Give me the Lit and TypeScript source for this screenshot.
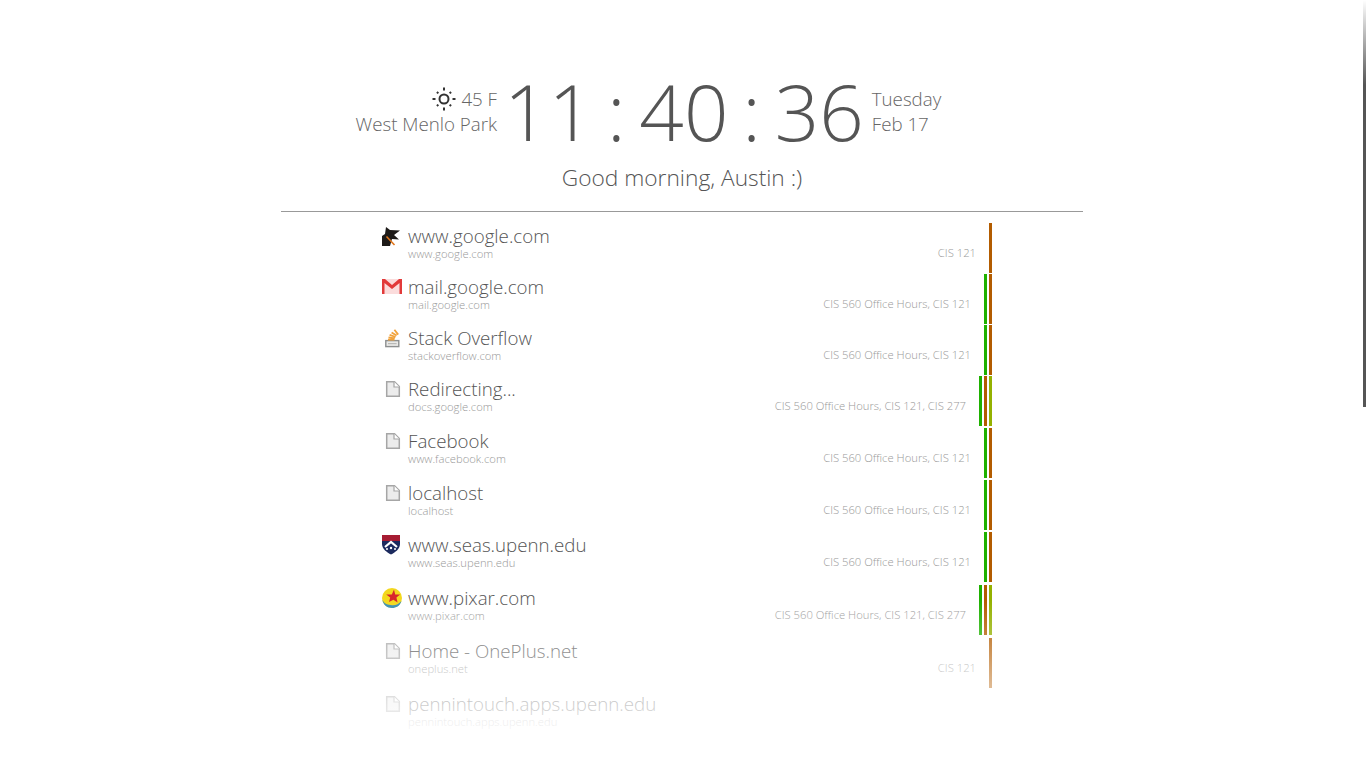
import { LitElement, html, css, svg } from "lit";
import { customElement } from "lit/decorators.js";

type Site = {
  title: string;
  host: string;
  icon: string;
  tags: string;
  bars: string[];
  gap: number;
};

const GREEN = "#1fb100";
const BROWN = "#b35c00";
const OLIVE = "#94b100";

// the row pitch grows slowly down the list in the reference
const sites: Site[] = [
  { title: "www.google.com", host: "www.google.com", icon: "dog", tags: "CIS 121", bars: [BROWN], gap: 1 },
  { title: "mail.google.com", host: "mail.google.com", icon: "mail", tags: "CIS 560 Office Hours, CIS 121", bars: [GREEN, BROWN], gap: 1 },
  { title: "Stack Overflow", host: "stackoverflow.com", icon: "stack", tags: "CIS 560 Office Hours, CIS 121", bars: [GREEN, BROWN], gap: 1 },
  { title: "Redirecting...", host: "docs.google.com", icon: "doc", tags: "CIS 560 Office Hours, CIS 121, CIS 277", bars: [GREEN, BROWN, OLIVE], gap: 2 },
  { title: "Facebook", host: "www.facebook.com", icon: "doc", tags: "CIS 560 Office Hours, CIS 121", bars: [GREEN, BROWN], gap: 2 },
  { title: "localhost", host: "localhost", icon: "doc", tags: "CIS 560 Office Hours, CIS 121", bars: [GREEN, BROWN], gap: 2 },
  { title: "www.seas.upenn.edu", host: "www.seas.upenn.edu", icon: "penn", tags: "CIS 560 Office Hours, CIS 121", bars: [GREEN, BROWN], gap: 3 },
  { title: "www.pixar.com", host: "www.pixar.com", icon: "ball", tags: "CIS 560 Office Hours, CIS 121, CIS 277", bars: [GREEN, BROWN, OLIVE], gap: 3 },
  { title: "Home - OnePlus.net", host: "oneplus.net", icon: "doc", tags: "CIS 121", bars: [BROWN], gap: 3 },
  { title: "pennintouch.apps.upenn.edu", host: "pennintouch.apps.upenn.edu", icon: "doc", tags: "", bars: [], gap: 0 },
];

const icons: Record<string, unknown> = {
  dog: svg`
    <path fill="#1d1a18" d="M0 10 3 8 4 1 8 4 18 4.5 12 9 17 13.5 10 13 8 20H0Z" />
    <path fill="none" stroke="#e0761c" stroke-width="1.6" d="M4.5 10.5 12.5 19" />`,
  mail: svg`
    <rect x="0" y="2" width="20" height="15" fill="#fbdcdc" />
    <path fill="#e23a3a" d="M0 2H3L10 8 17 2H20V17H17.5V6L10 12 2.5 6V17H0Z" />`,
  stack: svg`
    <rect x="3.8" y="12.6" width="13" height="6" fill="#e9e9e7" stroke="#8d8f90" stroke-width="1.4" />
    <path fill="none" stroke="#b9b9b7" stroke-width="1.2" d="M6 15.6H14.6" />
    <path fill="none" stroke="#f1a33c" stroke-width="1.8" d="M6 11.6H12.5M6.5 9.3 12.8 10.4M7.6 6.8 13.6 9M9.6 4.4 14.6 7.6M12.4 1.8 16.2 6.6" />`,
  doc: svg`
    <path fill="#ececec" stroke="#a6a6a6" stroke-width="1.5" d="M4.7 2.7H12.5L17.3 7.5V17.3H4.7Z" />
    <path fill="#fff" stroke="#a6a6a6" stroke-width="1.2" d="M12 2.7V8H17.3" />`,
  penn: svg`
    <path fill="#1c2a5e" d="M0 0H18V9C18 14 13 17.5 9 19.5 5 17.5 0 14 0 9Z" />
    <rect x="0" y="0" width="18" height="6" fill="#a61c32" />
    <path fill="none" stroke="#fff" stroke-width="2.2" d="M3 12 9 7 15 12" />
    <circle cx="5" cy="14" r="1" fill="#fff" /><circle cx="13" cy="14" r="1" fill="#fff" /><circle cx="9" cy="13" r="1.2" fill="#fff" />`,
  ball: svg`
    <circle cx="10" cy="10" r="10" fill="#f3d81e" />
    <path fill="#3a8fb5" d="M0.4 11.5C2 16 6 17 10 17.2 14 17.4 17 16 19.4 13 18 18 14 20 10 20 5 20 1 16.5 0.4 11.5Z" />
    <path fill="#d8262c" d="M12 1.5 13.2 6.4 18.2 6.6 14.4 9.6 15.6 14.4 11.4 11.8 7 14 8.2 9.6 4.2 6.6 9.8 6.6Z" />`,
};

@customElement("app-root")
export class AppRoot extends LitElement {
  static styles = css`
    :host {
      display: block;
      position: relative;
      height: 768px;
      overflow: hidden;
      background: #fff;
      font-family: "Open Sans", "Liberation Sans", sans-serif;
      font-weight: 300;
      color: #555;
    }

    .page {
      width: 802px;
      margin-left: 281px;
      padding-top: 63px;
    }

    .clock-row {
      display: grid;
      grid-template-columns: 216px auto 1fr;
      column-gap: 8px;
      align-items: center;
    }

    .weather,
    .date {
      font-size: 18.72px;
      line-height: 25px;
      color: #666;
    }

    .weather {
      text-align: right;
    }

    .temp {
      display: flex;
      justify-content: flex-end;
      align-items: center;
      gap: 5px;
    }

    .clock {
      font-size: 78px;
      line-height: 96px;
      word-spacing: -6.4px;
      margin-left: -1px;
      white-space: pre;
      color: #555;
    }

    .greeting {
      text-align: center;
      font-size: 22.72px;
      line-height: 30px;
      margin-top: 4px;
    }

    hr {
      margin: 18px 0 11px;
      border: 0;
      border-top: 1px solid #999;
      height: 0;
    }

    .list {
      width: 610px;
      margin-left: 101px;
    }

    .row {
      display: flex;
      height: 50px;
    }

    .icon {
      width: 20px;
      height: 20px;
      margin-top: 3px;
      margin-right: 6px;
      flex: none;
    }

    .names {
      flex: 1;
      min-width: 0;
    }

    .title {
      font-size: 18.72px;
      line-height: 24px;
      margin-top: 1px;
      color: #555;
    }

    .host {
      font-size: 11.25px;
      line-height: 13px;
      color: #999;
      margin-top: -1px;
    }

    .tags {
      font-size: 11.25px;
      line-height: 15px;
      color: #999;
      margin: 22px 13px 0 0;
      white-space: nowrap;
    }

    .bars {
      display: flex;
      gap: 2px;
    }

    .bar {
      width: 3px;
      height: 50px;
    }

    .fade {
      position: absolute;
      left: 0;
      right: 0;
      top: 600px;
      height: 150px;
      background: linear-gradient(rgba(255, 255, 255, 0), #fff);
    }

    .scrollbar {
      position: absolute;
      top: 0;
      right: 0;
      width: 3px;
      height: 407px;
      background: linear-gradient(rgba(85, 85, 85, 0), #555 85px);
    }
  `;

  private renderSun() {
    const rays = [0, 45, 90, 135, 180, 225, 270, 315];
    return html`<svg width="24" height="24" viewBox="0 0 24 24">
      <circle cx="12" cy="12" r="4.5" fill="none" stroke="#333" stroke-width="2" />
      ${rays.map(
        (a) => svg`<path d=${a % 90 ? "M12 2V4" : "M12 .5V3.5"} stroke="#333" stroke-width="2" transform="rotate(${a} 12 12)" />`
      )}
    </svg>`;
  }

  private renderRow(s: Site) {
    return html`<div class="row" style="margin-bottom:${s.gap}px">
      <svg class="icon" viewBox="0 0 20 20">${icons[s.icon]}</svg>
      <div class="names">
        <div class="title">${s.title}</div>
        <div class="host">${s.host}</div>
      </div>
      <div class="tags">${s.tags}</div>
      <div class="bars">
        ${s.bars.map((c) => html`<div class="bar" style="background:${c}"></div>`)}
      </div>
    </div>`;
  }

  render() {
    return html`
      <div class="page">
        <div class="clock-row">
          <div class="weather">
            <div class="temp">${this.renderSun()}<span>45 F</span></div>
            <div>West Menlo Park</div>
          </div>
          <div class="clock">11 : 40 : 36</div>
          <div class="date">
            <div>Tuesday</div>
            <div>Feb 17</div>
          </div>
        </div>
        <div class="greeting">Good morning, Austin :)</div>
        <hr />
        <div class="list">${sites.map((s) => this.renderRow(s))}</div>
      </div>
      <div class="fade"></div>
      <div class="scrollbar"></div>
    `;
  }
}
